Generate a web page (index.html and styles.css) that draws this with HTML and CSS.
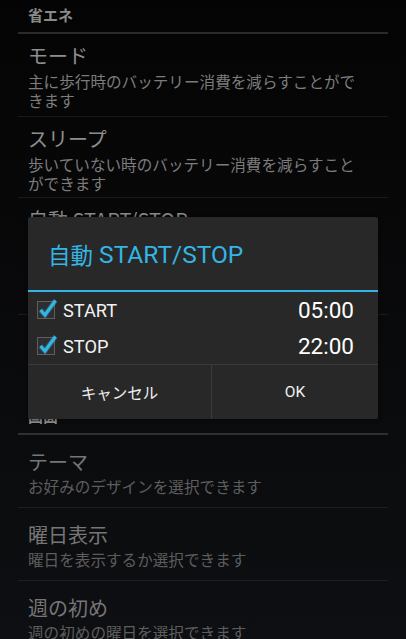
FILE: index.html
```html
<!DOCTYPE html>
<html lang="ja">
<head>
    <meta charset="UTF-8" />
    <meta name="viewport" content="width=device-width, initial-scale=1" />
    <title>設定</title>
    <link rel="stylesheet" href="styles.css">
</head>
<body>

<div class="screen">
    <div class="list">
        <div class="section-head">省エネ</div>
        <div class="item tall first">
            <div class="item-title">モード</div>
            <div class="item-summary">主に歩行時のバッテリー消費を減らすことができます</div>
        </div>
        <div class="item tall">
            <div class="item-title">スリープ</div>
            <div class="item-summary">歩いていない時のバッテリー消費を減らすことができます</div>
        </div>
        <div class="item tall auto">
            <div class="item-title">自動 START/STOP</div>
        </div>
        <div class="item hidden"></div>

        <div class="section-head lower">画面</div>
        <div class="item lower">
            <div class="item-title">テーマ</div>
            <div class="item-summary">お好みのデザインを選択できます</div>
        </div>
        <div class="item lower">
            <div class="item-title">曜日表示</div>
            <div class="item-summary">曜日を表示するか選択できます</div>
        </div>
        <div class="item lower">
            <div class="item-title">週の初め</div>
            <div class="item-summary">週の初めの曜日を選択できます</div>
        </div>
    </div>

    <div class="dialog">
        <div class="dialog-title"><span class="title-jp">自動</span>&nbsp;START/STOP</div>
        <div class="dialog-body">
            <div class="time-row">
                <svg class="check" width="24" height="24" viewBox="0 0 24 24">
                    <rect x="2.5" y="3.5" width="17" height="17" fill="#2d2e2f" stroke="#5e5e5e" stroke-width="1"/>
                    <path d="M5.5 12 L10 17 L20.5 2.5" fill="none" stroke="#33b5e5" stroke-opacity="0.35" stroke-width="5"/>
                    <path d="M5.5 12 L10 17 L20.5 2.5" fill="none" stroke="#33b5e5" stroke-width="3"/>
                </svg>
                <span class="label">START</span>
                <span class="time">05:00</span>
            </div>
            <div class="time-row">
                <svg class="check" width="24" height="24" viewBox="0 0 24 24">
                    <rect x="2.5" y="3.5" width="17" height="17" fill="#2d2e2f" stroke="#5e5e5e" stroke-width="1"/>
                    <path d="M5.5 12 L10 17 L20.5 2.5" fill="none" stroke="#33b5e5" stroke-opacity="0.35" stroke-width="5"/>
                    <path d="M5.5 12 L10 17 L20.5 2.5" fill="none" stroke="#33b5e5" stroke-width="3"/>
                </svg>
                <span class="label">STOP</span>
                <span class="time">22:00</span>
            </div>
        </div>
        <div class="dialog-buttons">
            <div class="button cancel">キャンセル</div>
            <div class="button">OK</div>
        </div>
    </div>
</div>

</body>
</html>
```

FILE: styles.css
```css
body {
    margin: 0;
    background-color: #000;
    font-family: Roboto, "Noto Sans CJK JP", sans-serif;
}
.screen {
    position: relative;
    width: 406px;
    height: 639px;
    overflow: hidden;
    background: linear-gradient(#040404, #0e0f12);
}
.list {
    padding: 0 18px;
}
/* Cabeceras de sección */
.section-head {
    height: 34px;
    box-sizing: border-box;
    padding: 4px 10px 0;
    font-family: "Noto Sans CJK JP", sans-serif;
    font-size: 15px;
    font-weight: bold;
    line-height: 22px;
    color: #8a8a8a;
    border-bottom: 2px solid #2a2a2a;
}
.section-head.lower {
    border-bottom-color: #2d2f32;
}
/* Elementos de la lista */
.item {
    padding: 14px 10px 11px;
    border-bottom: 1px solid #1a1a1a;
}
.item.tall {
    padding: 9px 24px 4px 10px;
}
.item.first {
    padding-bottom: 6px;
}
.item.auto {
    height: 103px;
}
.item.hidden {
    height: 86px;
    padding: 0;
    border-bottom: none;
}
.item.lower {
    border-bottom-color: #1c1e21;
}
.item-title {
    font-family: "Noto Sans CJK JP", sans-serif;
    font-size: 20px;
    line-height: 26px;
    color: #8e8e8e;
}
.item-summary {
    margin-top: 2px;
    font-family: "Noto Sans CJK JP", sans-serif;
    font-size: 15.6px;
    line-height: 19px;
    color: #7c7c7c;
}
.item.tall .item-summary {
    margin-top: 3px;
}
.item.lower .item-title {
    color: #767676;
}
.item.lower .item-summary {
    color: #5d5d5d;
}
/* Diálogo */
.dialog {
    position: absolute;
    left: 28px;
    top: 217px;
    width: 350px;
    height: 202px;
    background-color: #282828;
    border-radius: 2px;
    box-shadow: 0 0 4px rgba(0, 0, 0, 0.5);
    display: flex;
    flex-direction: column;
}
.dialog-title {
    height: 75px;
    box-sizing: border-box;
    padding: 1px 20px 0;
    display: flex;
    align-items: center;
    font-size: 24.5px;
    color: #33b5e5;
    border-bottom: 2px solid #33b5e5;
}
.title-jp {
    font-size: 22.5px;
}
.dialog-body {
    height: 72px;
}
.time-row {
    height: 36px;
    padding: 0 24px 0 7px;
    display: flex;
    align-items: center;
    color: #f2f2f2;
}
.check {
    flex-shrink: 0;
}
.label {
    margin-left: 4px;
    font-size: 18.2px;
}
.time {
    margin-left: auto;
    font-size: 22.5px;
    color: #fff;
}
.dialog-buttons {
    flex: 1;
    display: flex;
    border-top: 1px solid #3a3a3a;
}
.button {
    flex: 1;
    display: flex;
    align-items: center;
    justify-content: center;
    font-size: 15.5px;
    color: #f0f0f0;
}
.button.cancel {
    flex: 0 0 183px;
}
.button + .button {
    border-left: 1px solid #3a3a3a;
}
```
